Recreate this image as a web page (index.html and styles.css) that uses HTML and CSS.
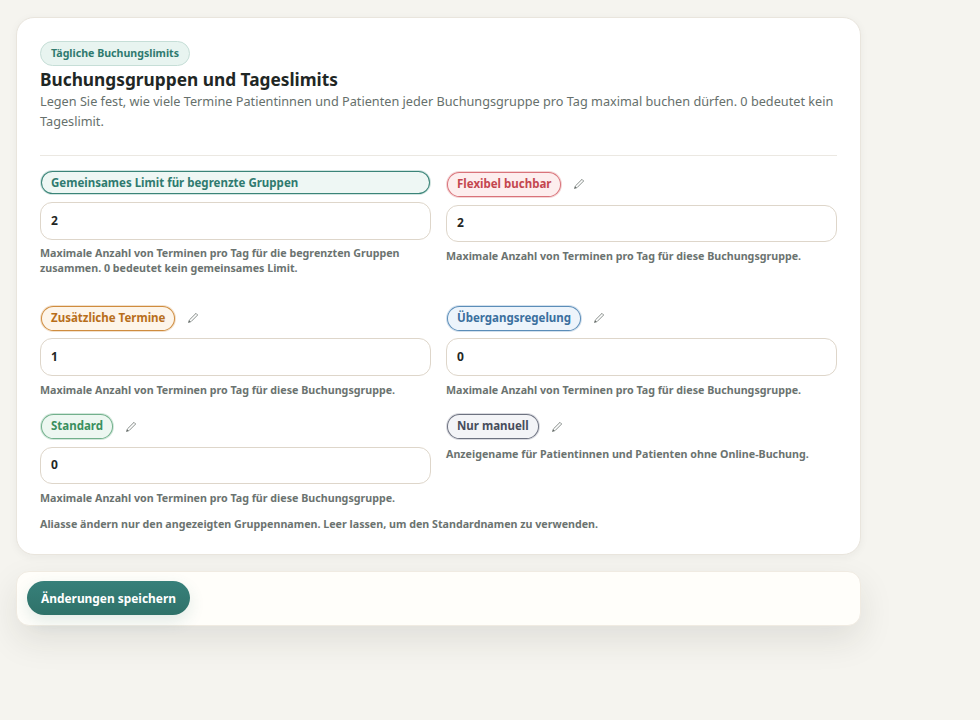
FILE: index.html
```html
<!DOCTYPE html>
<html lang="de">
<head>
<meta charset="utf-8">
<title>Buchungsgruppen und Tageslimits</title>
<link rel="stylesheet" href="styles.css">
</head>
<body>
<main class="page">
  <section class="card">
    <span class="eyebrow">Tägliche Buchungslimits</span>
    <h1>Buchungsgruppen und Tageslimits</h1>
    <p class="lead">Legen Sie fest, wie viele Termine Patientinnen und Patienten jeder Buchungsgruppe pro Tag maximal buchen dürfen. 0 bedeutet kein Tageslimit.</p>
    <hr class="divider">
    <div class="grid">
      <div class="field first">
        <div class="pill-wide">Gemeinsames Limit für begrenzte Gruppen</div>
        <div class="input">2</div>
        <p class="help help-tight">Maximale Anzahl von Terminen pro Tag für die begrenzten Gruppen zusammen. 0 bedeutet kein gemeinsames Limit.</p>
      </div>
      <div class="field first">
        <div class="label-row lowered">
          <span class="pill red">Flexibel buchbar</span>
          <svg class="pen" viewBox="0 0 16 16"><path d="M12 1.8l2.2 2.2-8.8 8.8-3.4 1.2 1.2-3.4z"/><path class="tip" d="M2.2 13.8l.7-2 1.3 1.3z"/></svg>
        </div>
        <div class="input input-up">2</div>
        <p class="help">Maximale Anzahl von Terminen pro Tag für diese Buchungsgruppe.</p>
      </div>
      <div class="field">
        <div class="label-row">
          <span class="pill orange">Zusätzliche Termine</span>
          <svg class="pen" viewBox="0 0 16 16"><path d="M12 1.8l2.2 2.2-8.8 8.8-3.4 1.2 1.2-3.4z"/><path class="tip" d="M2.2 13.8l.7-2 1.3 1.3z"/></svg>
        </div>
        <div class="input">1</div>
        <p class="help">Maximale Anzahl von Terminen pro Tag für diese Buchungsgruppe.</p>
      </div>
      <div class="field">
        <div class="label-row">
          <span class="pill blue">Übergangsregelung</span>
          <svg class="pen" viewBox="0 0 16 16"><path d="M12 1.8l2.2 2.2-8.8 8.8-3.4 1.2 1.2-3.4z"/><path class="tip" d="M2.2 13.8l.7-2 1.3 1.3z"/></svg>
        </div>
        <div class="input">0</div>
        <p class="help">Maximale Anzahl von Terminen pro Tag für diese Buchungsgruppe.</p>
      </div>
      <div class="field">
        <div class="label-row">
          <span class="pill green">Standard</span>
          <svg class="pen" viewBox="0 0 16 16"><path d="M12 1.8l2.2 2.2-8.8 8.8-3.4 1.2 1.2-3.4z"/><path class="tip" d="M2.2 13.8l.7-2 1.3 1.3z"/></svg>
        </div>
        <div class="input input-up">0</div>
        <p class="help">Maximale Anzahl von Terminen pro Tag für diese Buchungsgruppe.</p>
      </div>
      <div class="field">
        <div class="label-row">
          <span class="pill grey">Nur manuell</span>
          <svg class="pen" viewBox="0 0 16 16"><path d="M12 1.8l2.2 2.2-8.8 8.8-3.4 1.2 1.2-3.4z"/><path class="tip" d="M2.2 13.8l.7-2 1.3 1.3z"/></svg>
        </div>
        <p class="help">Anzeigename für Patientinnen und Patienten ohne Online-Buchung.</p>
      </div>
    </div>
    <p class="help note">Aliasse ändern nur den angezeigten Gruppennamen. Leer lassen, um den Standardnamen zu verwenden.</p>
  </section>
  <div class="actions">
    <button class="save" type="button">Änderungen speichern</button>
  </div>
</main>
</body>
</html>
```
FILE: styles.css
```css
* { box-sizing: border-box; }
html, body { margin: 0; height: 100%; }
body {
  background: #f5f4ef;
  color: #1f2725;
  font-family: "Noto Sans", sans-serif;
  overflow: hidden;
}
.page {
  width: 845px;
  margin-left: 16px;
  padding-top: 17px;
  display: flex;
  flex-direction: column;
  gap: 16px;
}
.card {
  background: #fff;
  border: 1px solid #e9e5dd;
  border-radius: 18px;
  padding: 23px 23px 22px;
  box-shadow: 0 2px 8px rgba(40, 40, 30, 0.05);
}
.eyebrow {
  display: inline-block;
  height: 25px;
  line-height: 23px;
  padding: 0 10px;
  font-size: 10.62px;
  font-weight: 700;
  color: #2f7a6f;
  background: #e8f4f0;
  border: 1px solid #c6ded7;
  border-radius: 13px;
  vertical-align: top;
}
h1 {
  margin: 0;
  padding-top: 2px;
  font-size: 17.3px;
  line-height: 23px;
  font-weight: 700;
  color: #1f2725;
}
.lead {
  margin: 0;
  font-size: 12.7px;
  line-height: 20px;
  color: #66706c;
}
.divider {
  border: 0;
  border-top: 1px solid #ebe8e2;
  margin: 24px 0 14px;
}
.grid {
  display: grid;
  grid-template-columns: 1fr 1fr;
  column-gap: 15px;
  row-gap: 16px;
}
.field.first { min-height: 119px; }
.pill-wide {
  height: 25px;
  line-height: 23px;
  padding: 0 10px;
  font-size: 11.5px;
  font-weight: 700;
  color: #2f7a6f;
  background: #eef7f4;
  border: 1px solid rgba(47, 122, 111, 0.15);
  border-radius: 13px;
  box-shadow: inset 0 0 0 1px #3a8478;
}
.label-row {
  display: flex;
  align-items: center;
  gap: 11px;
  height: 26px;
}
.label-row.lowered {
  margin-top: 1px;
  height: 26.6px;
}
.pill {
  height: 27px;
  line-height: 24px;
  padding: 0 10px;
  font-size: 11.5px;
  font-weight: 700;
  border: 1px solid;
  border-radius: 14px;
  white-space: nowrap;
}
.red { color: #c4474f; background: #fdeeee; border-color: rgba(196, 71, 79, 0.15); box-shadow: inset 0 0 0 1px #d9737a; }
.orange { color: #b86e1a; background: #fdf5ea; border-color: rgba(184, 110, 26, 0.15); box-shadow: inset 0 0 0 1px #cf8c3e; }
.blue { color: #3a6f9e; background: #edf4fb; border-color: rgba(58, 111, 158, 0.15); box-shadow: inset 0 0 0 1px #5b8db8; }
.green { color: #3a8f5e; background: #edf7f1; border-color: rgba(58, 143, 94, 0.15); box-shadow: inset 0 0 0 1px #72b08c; }
.grey { color: #474d5c; background: #f3f4f7; border-color: rgba(71, 77, 92, 0.15); box-shadow: inset 0 0 0 1px #6d7280; }
.pen {
  width: 12px;
  height: 12px;
  fill: none;
  stroke: #6f7672;
  stroke-width: 1.1;
  stroke-linejoin: round;
  flex: none;
}
.pen .tip { fill: #4d5350; stroke: none; }
.input {
  height: 37.5px;
  margin-top: 7px;
  padding: 0 10px;
  line-height: 35.5px;
  font-size: 12px;
  font-weight: 700;
  color: #1f2725;
  background: #fff;
  border: 1px solid #ded6ca;
  border-radius: 12px;
}
.input-up { line-height: 34.5px; }
.help {
  margin: 7px 0 0;
  font-size: 10.7px;
  line-height: 15px;
  font-weight: 700;
  color: #6b7370;
}
.help-tight { margin-top: 6px; }
.note { margin-top: 11px; }
.actions {
  height: 55px;
  padding: 9px 10px;
  background: #fffefa;
  border: 1px solid #f0ebe2;
  border-radius: 13px;
  box-shadow: 0 14px 34px rgba(40, 40, 30, 0.1);
}
.save {
  display: block;
  height: 34px;
  padding: 0 14px;
  font-family: inherit;
  font-size: 11.9px;
  font-weight: 700;
  color: #fff;
  background: linear-gradient(#37807a, #2f7269);
  border: 0;
  border-radius: 17px;
  box-shadow: 0 6px 16px rgba(49, 122, 111, 0.14);
}
```
